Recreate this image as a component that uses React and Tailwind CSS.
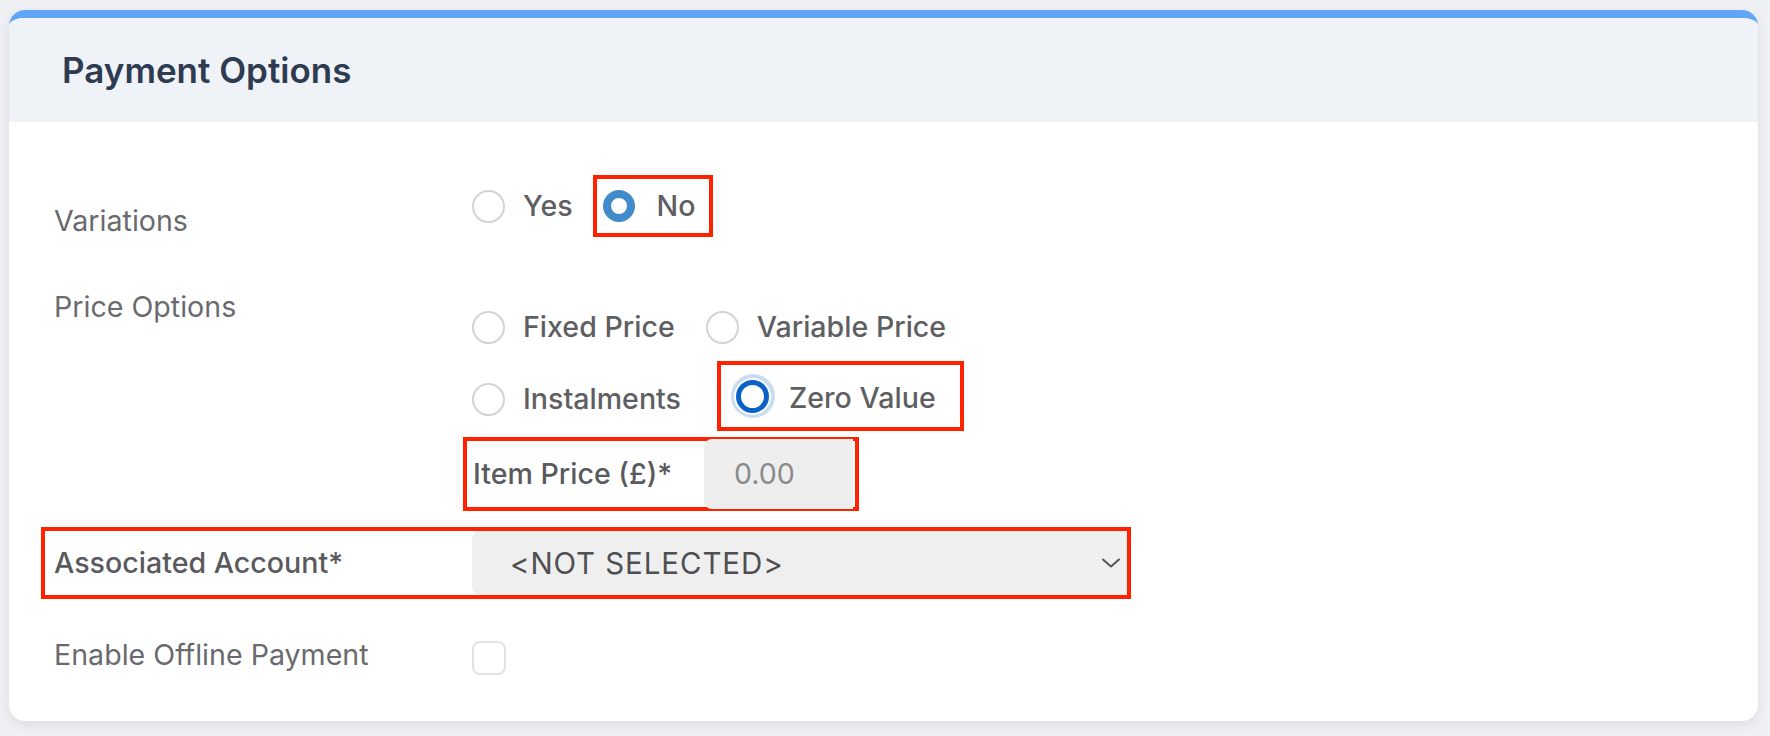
import React from 'react';

function Radio({ label }) {
  return (
    <label className="flex items-center gap-[18px]">
      <span className="w-[33px] h-[33px] rounded-full border-2 border-[#d3d3d3] bg-white shrink-0" />
      <span className="text-[28.6px] font-medium text-[#5f5f63] leading-[36px]">{label}</span>
    </label>
  );
}

function App() {
  return (
    <div className="min-h-[736px] bg-[#eef0f4] pt-[10px] pl-[9px] pr-[12px] pb-[15px] font-['Inter',sans-serif]">
      <div className="bg-white rounded-2xl border-t-8 border-[#60a5fa] shadow-[0_4px_12px_rgba(0,0,0,0.08)] overflow-hidden">
        {/* header */}
        <div className="h-[104px] bg-[#eff3f8] flex items-center pl-[53px]">
          <h2 className="text-[35px] font-semibold text-[#2e3b50]">Payment Options</h2>
        </div>

        <div className="pl-[45px] pt-[53px] pb-[45px]">
          {/* Variations */}
          <div className="flex">
            <div className="w-[418px] pt-[28px] text-[28.6px] leading-[36px] text-[#6a6a6e]">Variations</div>
            <div className="flex items-center h-[62px]">
              <Radio label="Yes" />
              <div className="ml-[20px] h-[62px] border-[4px] border-[#ff2200] flex items-center pl-[6px] pr-[13px]">
                <label className="flex items-center gap-[22px]">
                  <span className="w-[32px] h-[32px] rounded-full border-[8px] border-[#428bca] bg-white shrink-0" />
                  <span className="text-[28.6px] font-medium text-[#5f5f63] leading-[36px]">No</span>
                </label>
              </div>
            </div>
          </div>

          {/* Price options */}
          <div className="flex mt-[50px]">
            <div className="w-[418px] text-[28.6px] leading-[36px] text-[#6a6a6e]">Price Options</div>
            <div className="pt-[13px] flex flex-col">
              <div className="flex items-center h-[50px] gap-[31px]">
                <Radio label="Fixed Price" />
                <Radio label="Variable Price" />
              </div>
              <div className="flex items-center h-[70px] mt-[9px]">
                <div className="pt-[6px]">
                  <Radio label="Instalments" />
                </div>
                <div className="ml-[36px] h-[70px] border-[4px] border-[#ff2200] flex items-center pl-[10px] pr-[24px] gap-[14px]">
                  <span className="w-[44px] h-[44px] rounded-full bg-[#c8ddf1] flex items-center justify-center shrink-0">
                    <span className="w-[37px] h-[37px] rounded-full bg-white flex items-center justify-center">
                      <span className="w-[33px] h-[33px] rounded-full border-[5px] border-[#0b62c6] bg-white" />
                    </span>
                  </span>
                  <span className="pt-[4px] text-[28.6px] font-medium text-[#5f5f63] leading-[36px]">Zero Value</span>
                </div>
              </div>
              <div className="mt-[6px] -ml-[9px] w-[396px] h-[74px] border-[4px] border-[#ff2200] flex items-stretch">
                <div className="flex items-center pl-[6px] text-[28.6px] font-medium text-[#5a5a5e]">Item Price (£)*</div>
                <div className="ml-auto mr-[2px] -my-[2px] w-[149px] bg-[#eeeeee] rounded-l-[8px] flex items-center pl-[30px] text-[28.6px] text-[#8a8a8a]">
                  0.00
                </div>
              </div>
            </div>
          </div>

          {/* Associated account */}
          <div className="mt-[16px] -ml-[13px] w-[1090px] h-[72px] border-[4px] border-[#ff2200] flex items-stretch">
            <div className="w-[427px] pl-[9px] flex items-center text-[28.6px] font-medium text-[#5a5a5e]">
              Associated Account*
            </div>
            <div className="flex-1 bg-[#efefef] rounded-l-[8px] flex items-center justify-between pl-[38px] pr-[7px]">
              <span className="text-[29.5px] tracking-[0.9px] text-[#4f4f53]">&lt;NOT SELECTED&gt;</span>
              <svg width="18" height="10" viewBox="0 0 18 10" fill="none" stroke="#555" strokeWidth="2" strokeLinecap="round" strokeLinejoin="round">
                <path d="M1 1.5l8 7 8-7" />
              </svg>
            </div>
          </div>

          {/* Offline payment */}
          <div className="flex items-center mt-[43px] h-[34px]">
            <div className="w-[418px] text-[28.6px] leading-[36px] text-[#6a6a6e] -mt-[8px]">Enable Offline Payment</div>
            <span className="w-[34px] h-[34px] rounded-[8px] border-2 border-[#e2e2e2] bg-white -mt-[2px]" />
          </div>
        </div>
      </div>
    </div>
  );
}

export default App;
